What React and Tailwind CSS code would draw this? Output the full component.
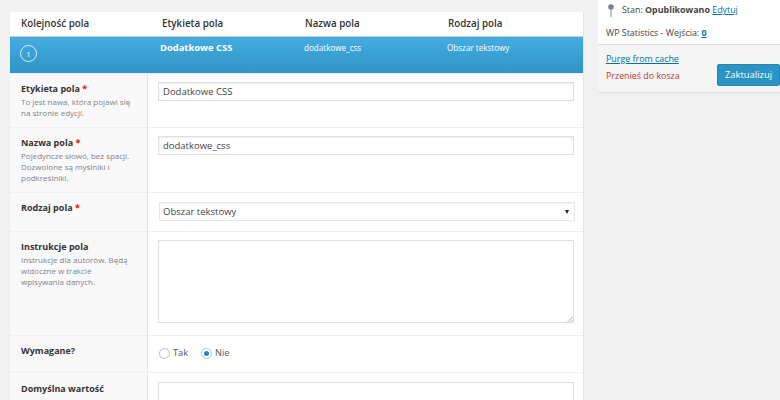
import React from "react";

function Row({ label, required, help, className, children }) {
  return (
    <div className={"flex border-t border-[#f0f0f0] " + className}>
      <div className="w-[138px] shrink-0 bg-[#f9f9f9] border-r border-[#e6e6e6] pl-[11px] pt-[7px]">
        <div className="text-[9px] leading-[16px] font-bold text-[#333] whitespace-nowrap">
          {label} {required && <span className="text-[#f00]">*</span>}
        </div>
        {help && (
          <div className="text-[8px] leading-[11px] text-[#7e858b] mt-[-1px] whitespace-nowrap">
            {help.map((line) => (
              <div key={line}>{line}</div>
            ))}
          </div>
        )}
      </div>
      <div className="flex-1 pl-[10px] pr-[10px] pt-[8px]">{children}</div>
    </div>
  );
}

export default function App() {
  const inputClass =
    "block w-[416px] h-[19px] border border-[#dfdfdf] shadow-[inset_0_1px_2px_rgba(0,0,0,0.07)] bg-white px-1 text-[9.5px] leading-[17px] text-[#444]";

  return (
    <div className="h-[400px] w-[780px] overflow-hidden bg-[#f1f1f1] flex items-start font-['Open_Sans',sans-serif]">
      <div className="ml-[10px] mt-[12px] w-[574px] bg-white border-r border-[#e5e5e5] shrink-0">
        <div className="h-[25px] flex items-center text-[9.8px] font-semibold text-[#333] border-b border-[#ccc]">
          <div className="w-[152px] pl-[11px]">Kolejność pola</div>
          <div className="w-[143px]">Etykieta pola</div>
          <div className="w-[143px]">Nazwa pola</div>
          <div>Rodzaj pola</div>
        </div>
        <div className="h-[36px] flex pt-[3px] text-[8.1px] leading-[15px] text-white bg-gradient-to-b from-[#45ace0] to-[#2f95c6]">
          <div className="w-[150px] pl-[10px] pt-[5px]">
            <div className="w-[17px] h-[17px] rounded-full border border-white/80 flex items-center justify-center text-[8px] leading-none">
              1
            </div>
          </div>
          <div className="w-[144px] text-[9.4px] font-bold">Dodatkowe CSS</div>
          <div className="w-[143px]">dodatkowe_css</div>
          <div>Obszar tekstowy</div>
        </div>
        <Row
          label="Etykieta pola"
          required
          help={["To jest nawa, która pojawi się", "na stronie edycji."]}
          className="h-[54px]"
        >
          <div className={inputClass}>Dodatkowe CSS</div>
        </Row>
        <Row
          label="Nazwa pola"
          required
          help={["Pojedyncze słowo, bez spacji.", "Dozwolone są myślniki i", "podkreślniki."]}
          className="h-[65px]"
        >
          <div className={inputClass}>dodatkowe_css</div>
        </Row>
        <Row label="Rodzaj pola" required className="h-[39px]">
          <div className="ml-px mt-px w-[416px] h-[19px] border border-[#e8e8e8] shadow-[inset_0_1px_1px_rgba(0,0,0,0.05)] bg-white pl-[3px] pr-[5px] flex items-center justify-between text-[9.5px] text-[#444]">
            <span className="pt-px">Obszar tekstowy</span>
            <span className="w-0 h-0 border-x-[2.5px] border-x-transparent border-t-[4px] border-t-[#222]" />
          </div>
        </Row>
        <Row
          label="Instrukcje pola"
          help={["Instrukcje dla autorów. Będą", "widoczne w trakcie", "wpisywania danych."]}
          className="h-[104px]"
        >
          <div className="relative w-[416px] h-[83px] border border-[#dfdfdf] bg-white">
            <svg className="absolute right-0 bottom-0" width="6" height="6" viewBox="0 0 6 6" stroke="#999" strokeWidth="0.8">
              <path d="M0.5 6L6 0.5M3.5 6L6 3.5" />
            </svg>
          </div>
        </Row>
        <Row label="Wymagane?" className="h-[37px]">
          <div className="flex items-center gap-[13px] ml-px mt-px text-[9.2px] leading-[16px] text-[#555]">
            <label className="flex items-center gap-[3px]">
              <span className="w-[11px] h-[11px] rounded-full border border-[#bbb] bg-white" />
              Tak
            </label>
            <label className="flex items-center gap-[3px]">
              <span className="w-[11px] h-[11px] rounded-full border border-[#bbb] bg-white flex items-center justify-center">
                <span className="w-[5px] h-[5px] rounded-full bg-[#1e8cbe]" />
              </span>
              Nie
            </label>
          </div>
        </Row>
        <Row
          label="Domyślna wartość"
          help={["Pojawia się podczas tworzenia"]}
          className="h-[60px] pt-px"
        >
          <div className="w-[416px] h-[50px] border border-[#dfdfdf] bg-white" />
        </Row>
      </div>

      <div className="ml-[14px] w-[182px] shrink-0 text-[8.9px] text-[#444]">
        <div className="bg-white h-[44px] pl-[8px] pt-[1px]">
          <div className="flex items-center h-[18px]">
            <svg className="mr-[8px] ml-[2px]" width="6" height="13" viewBox="0 0 6 13">
              <circle cx="3" cy="3" r="2.8" fill="#808080" />
              <rect x="2.4" y="5" width="1.2" height="8" fill="#9a9a9a" />
            </svg>
            <span>
              Stan: <b className="font-bold">Opublikowano</b>{" "}
              <span className="text-[#0074a2] underline">Edytuj</span>
            </span>
          </div>
          <div className="mt-[5px] h-[18px] leading-[18px]">
            WP Statistics - Wejścia: <b className="text-[#0074a2] underline font-bold">0</b>
          </div>
        </div>
        <div className="bg-[#f5f5f5] border-t border-b border-[#dfdfdf] h-[49px] relative pl-[8px] pt-[6px]">
          <div className="text-[#0074a2] underline leading-[15px]">Purge from cache</div>
          <div className="text-[#c8352f] leading-[15px] mt-[2px]">Przenieś do kosza</div>
          <button className="absolute left-[119px] top-[19px] w-[63px] h-[22px] rounded-[2px] bg-[#2a95c5] border border-[#2a85b0] text-white text-[9.4px] leading-none">
            Zaktualizuj
          </button>
        </div>
      </div>
    </div>
  );
}
